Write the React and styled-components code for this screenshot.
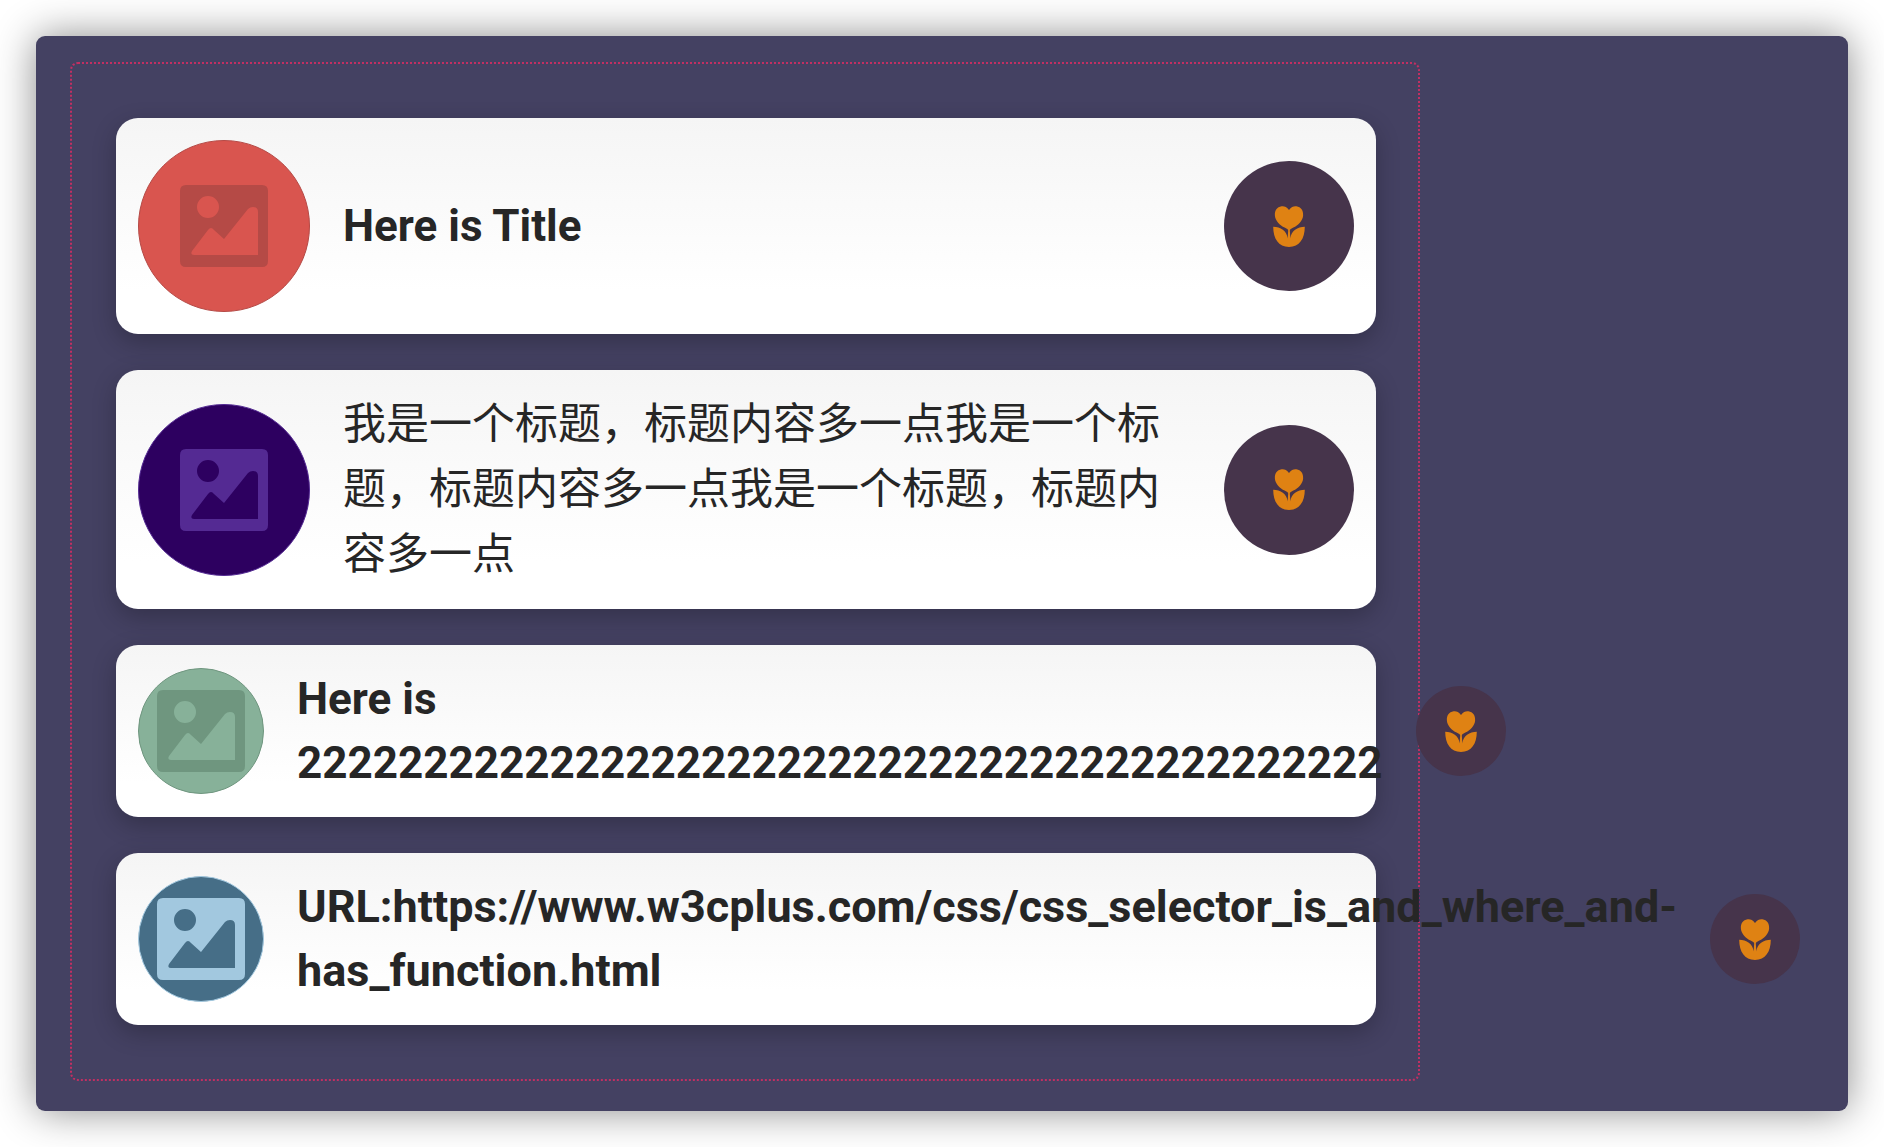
import React from 'react';
import styled, { createGlobalStyle } from 'styled-components';

const GlobalStyle = createGlobalStyle`
  *, *::before, *::after { box-sizing: border-box; }
  body {
    margin: 0;
    background: #fff;
    color: #262626;
    font-family: Roboto, "Noto Sans CJK SC", sans-serif;
  }
`;

const Page = styled.main`
  padding: 36px;
`;

const Panel = styled.section`
  padding: 26px 34px 30px;
  border-radius: 9px;
  background: #444162;
  box-shadow: 0 0 40px rgba(0, 0, 0, 0.46);
`;

const CardList = styled.ul`
  display: flex;
  flex-direction: column;
  gap: 36px;
  width: 100%;
  max-width: 1350px;
  margin: 0;
  padding: 54px 42px 54px 44px;
  border: 2px dotted #c22f62;
  border-radius: 8px;
  list-style: none;
`;

const Card = styled.li`
  display: flex;
  align-items: center;
  gap: 33px;
  padding: 22px;
  border-radius: 22px;
  background: linear-gradient(to bottom, #f5f5f5, #fff 80%);
  box-shadow: 0 8px 24px rgba(0, 0, 0, 0.24);
`;

const Avatar = styled.div`
  display: flex;
  align-items: center;
  justify-content: center;
  flex: 0 1 172px;
  min-width: 126px;
  aspect-ratio: 1;
  border: 1px solid ${(p) => p.$tint};
  border-radius: 50%;
  background: ${(p) => p.$fill};
  color: ${(p) => p.$tint};
`;

const Title = styled.h3`
  flex: 1 1 0;
  margin: 0;
  font-size: ${(p) => p.$size}px;
  font-weight: ${(p) => (p.$regular ? 400 : 700)};
  line-height: ${(p) => (p.$regular ? 65 : 64)}px;
`;

const FlowerButton = styled.button`
  display: flex;
  align-items: center;
  justify-content: center;
  flex: 0 1 130px;
  min-width: 90px;
  aspect-ratio: 1;
  padding: 0;
  border: 0;
  border-radius: 50%;
  background: #46344b;
  color: #df8213;
  cursor: pointer;
`;

const Glyph = styled.svg`
  display: block;
  flex: none;
  fill: currentColor;
`;

const ImageIcon = () => (
  <Glyph width="88" height="82" viewBox="0 0 88 82" aria-hidden="true">
    <path
      fillRule="evenodd"
      d="M6 0H82Q88 0 88 6V76Q88 82 82 82H6Q0 82 0 76V6Q0 0 6 0Z
         M28 11A11 11 0 1 0 28 33A11 11 0 1 0 28 11Z
         M12 66L28 45Q31 41 34 45L44 54L68 24Q70 22 73 22Q78 22 78 27V70H14Q10 70 12 66Z"
    />
  </Glyph>
);

const FlowerIcon = () => (
  <Glyph width="32" height="41" viewBox="0 0 94 122" aria-hidden="true">
    <path d="M47 12C54 2 62 0 69 1C83 3 90 14 89 28C88 44 74 57 60 64Q51 68 47 74Q43 68 34 64C20 57 6 44 5 28C4 14 11 3 25 1C32 0 40 2 47 12Z" />
    <path d="M0 62C22 62 40 74 43 96L45 66H49L51 96C54 74 72 62 94 62C94 98 78 122 47 122C16 122 0 98 0 62Z" />
  </Glyph>
);

const items = [
  { title: 'Here is Title', fill: '#d9554f', tint: '#b54a46', size: 44 },
  {
    title: '我是一个标题，标题内容多一点我是一个标题，标题内容多一点我是一个标题，标题内容多一点',
    fill: '#2d0060',
    tint: '#542a93',
    size: 43,
    regular: true,
    lang: 'zh-CN',
  },
  {
    title: 'Here is 2222222222222222222222222222222222222222222',
    fill: '#87b199',
    tint: '#6f967f',
    size: 44,
  },
  {
    title: 'URL:https://www.w3cplus.com/css/css_selector_is_and_where_and-has_function.html',
    fill: '#466e87',
    tint: '#a2c8df',
    size: 45,
  },
];

export default function App() {
  return (
    <>
      <GlobalStyle />
      <Page>
        <Panel>
          <CardList>
            {items.map((item) => (
              <Card key={item.title}>
                <Avatar $fill={item.fill} $tint={item.tint}>
                  <ImageIcon />
                </Avatar>
                <Title $size={item.size} $regular={item.regular} lang={item.lang}>
                  {item.title}
                </Title>
                <FlowerButton type="button" aria-label="Flower">
                  <FlowerIcon />
                </FlowerButton>
              </Card>
            ))}
          </CardList>
        </Panel>
      </Page>
    </>
  );
}
